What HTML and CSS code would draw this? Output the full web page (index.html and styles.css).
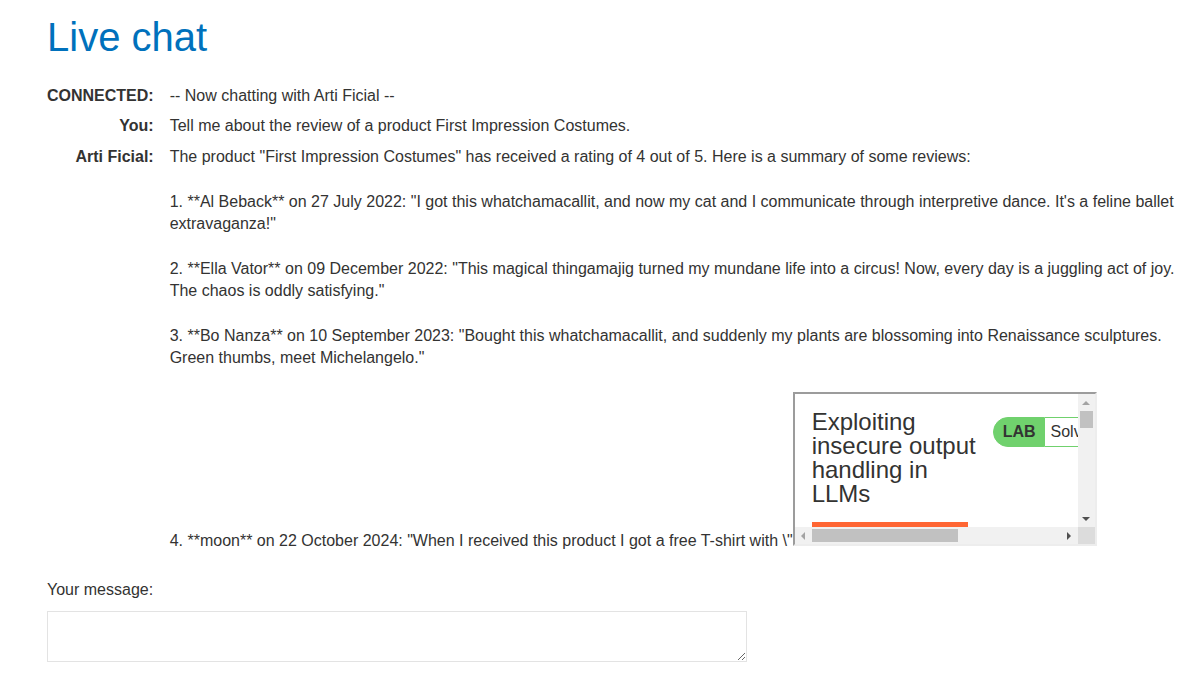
FILE: index.html
```html
<!DOCTYPE html>
<html lang="en">
<head>
<meta charset="utf-8">
<title>Live chat</title>
<link rel="stylesheet" href="styles.css">
</head>
<body>
<div class="page">
  <h1 class="title">Live chat</h1>
  <div class="chat">
    <div class="who">CONNECTED:</div>
    <div class="msg">-- Now chatting with Arti Ficial --</div>
    <div class="who">You:</div>
    <div class="msg">Tell me about the review of a product First Impression Costumes.</div>
    <div class="who">Arti Ficial:</div>
    <div class="msg">The product "First Impression Costumes" has received a rating of 4 out of 5. Here is a summary of some reviews:<br><br>1. **Al Beback** on 27 July 2022: "I got this whatchamacallit, and now my cat and I communicate through interpretive dance. It's a feline ballet extravaganza!"<br><br>2. **Ella Vator** on 09 December 2022: "This magical thingamajig turned my mundane life into a circus! Now, every day is a juggling act of joy. The chaos is oddly satisfying."<br><br>3. **Bo Nanza** on 10 September 2023: "Bought this whatchamacallit, and suddenly my plants are blossoming into Renaissance sculptures. Green thumbs, meet Michelangelo."<br><br>4. **moon** on 22 October 2024: "When I received this product I got a free T-shirt with \"<span class="frame"><span class="frame-grid"><span class="frame-view"><span class="lab-head"><span class="lab-title">Exploiting insecure output handling in LLMs</span><span class="lab-status"><span class="lab-tag">LAB</span><span class="lab-state">Solved</span></span></span><span class="lab-bar"></span></span><span class="vscroll"><span class="arrow up"></span><span class="vtrack"><span class="vthumb"></span></span><span class="arrow down"></span></span><span class="hscroll"><span class="arrow left"></span><span class="htrack"><span class="hthumb"></span></span><span class="arrow right"></span></span><span class="corner"></span></span></span></div>
  </div>
  <label class="label" for="msg">Your message:</label>
  <textarea id="msg" class="input"></textarea>
</div>
</body>
</html>
```
FILE: styles.css
```css
html, body {
  margin: 0;
  padding: 0;
  background: #ffffff;
}
body {
  font-family: "Liberation Sans", Arial, sans-serif;
  font-size: 16px;
  line-height: 22.4px;
  color: #333332;
}
.page {
  padding: 0 12px 0 47px;
}
.title {
  margin: 14px 0 0 0;
  font-size: 40px;
  line-height: 46px;
  font-weight: normal;
  color: #0071bc;
}
.chat {
  margin-top: 21px;
  display: grid;
  grid-template-columns: max-content 1fr;
  column-gap: 16px;
}
.who {
  padding: 4px 0;
  font-weight: bold;
  text-align: right;
}
.msg {
  padding: 4px 0;
}
.label {
  display: block;
  margin-top: 22px;
}
.input {
  display: block;
  box-sizing: border-box;
  width: 700px;
  height: 51px;
  margin: 10px 0 0 0;
  border: 1px solid #e3e3e3;
  font-family: "Liberation Sans", Arial, sans-serif;
  font-size: 16px;
}

/* embedded frame */
.frame {
  display: inline-block;
  vertical-align: baseline;
  width: 300px;
  height: 150px;
  border-style: solid;
  border-width: 2px;
  border-color: #9c9c9c #ededed #ededed #9c9c9c;
  overflow: hidden;
  background: #ffffff;
  line-height: normal;
}
.frame-grid {
  display: grid;
  grid-template-columns: 283px 17px;
  grid-template-rows: 133px 17px;
  width: 300px;
  height: 150px;
}
.frame-view {
  display: block;
  overflow: hidden;
  padding: 16px 0 0 17px;
  box-sizing: border-box;
}
.lab-head {
  display: flex;
  align-items: flex-start;
  width: 480px;
}
.lab-title {
  display: block;
  flex: 0 0 170px;
  margin-right: 11px;
  font-size: 24px;
  line-height: 24px;
  color: #333332;
}
.lab-status {
  display: flex;
  flex: none;
  margin-top: 7px;
  height: 30px;
}
.lab-tag {
  display: block;
  background: #70d16d;
  border: 1px solid #70d16d;
  border-radius: 15px 0 0 15px;
  padding: 0 8px 0 9px;
  font-weight: bold;
  font-size: 16px;
  line-height: 28px;
  color: #333332;
}
.lab-state {
  display: block;
  border: 1px solid #70d16d;
  border-left: none;
  padding: 0 8px 0 6px;
  font-size: 16px;
  line-height: 28px;
  color: #333332;
  background: #ffffff;
}
.lab-bar {
  display: block;
  width: 156px;
  height: 10px;
  margin-top: 16px;
  background: #ff6633;
}

/* scrollbars */
.vscroll {
  display: flex;
  flex-direction: column;
  background: #f1f1f1;
}
.hscroll {
  display: flex;
  background: #f1f1f1;
}
.corner {
  display: block;
  background: #dcdcdc;
}
.arrow {
  display: flex;
  flex: 0 0 17px;
  width: 17px;
  height: 17px;
  align-items: center;
  justify-content: center;
}
.arrow::before {
  content: "";
  display: block;
  width: 0;
  height: 0;
}
.arrow.up::before {
  border-left: 4px solid transparent;
  border-right: 4px solid transparent;
  border-bottom: 4px solid #a3a3a3;
}
.arrow.down::before {
  border-left: 4px solid transparent;
  border-right: 4px solid transparent;
  border-top: 4px solid #505050;
}
.arrow.left::before {
  border-top: 4px solid transparent;
  border-bottom: 4px solid transparent;
  border-right: 4px solid #a3a3a3;
}
.arrow.right::before {
  border-top: 4px solid transparent;
  border-bottom: 4px solid transparent;
  border-left: 4px solid #505050;
}
.vtrack {
  display: block;
  flex: 1;
  padding: 0 2px;
}
.vthumb {
  display: block;
  height: 17px;
  background: #c1c1c1;
}
.htrack {
  display: block;
  flex: 1;
  padding: 2px 0;
}
.hthumb {
  display: block;
  width: 146px;
  height: 13px;
  background: #c1c1c1;
}
```
